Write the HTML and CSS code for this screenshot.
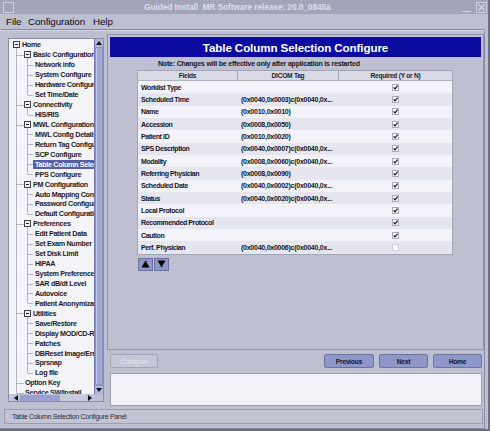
FILE: index.html
```html
<!DOCTYPE html>
<html>
<head>
<meta charset="utf-8">
<link rel="stylesheet" href="styles.css">
</head>
<body>
<div class="win">
  <div class="titlebar">
    <span class="ticon"></span>
    <span class="ttext">Guided Install&nbsp; MR Software release: 20.0_0845a</span>
    <span class="tmin"></span>
    <span class="tclose"><svg width="9" height="9" viewBox="0 0 9 9"><path d="M1.5 1.5L7.5 7.5M7.5 1.5L1.5 7.5" stroke="#d4d6e2" stroke-width="1.2"/></svg></span>
  </div>
  <div class="menubar">
    <span class="menu m-file">File</span>
    <span class="menu m-conf">Configuration</span>
    <span class="menu">Help</span>
  </div>
  <div class="bodyarea">
    <div class="main">
      <div class="navbox">
        <div class="navtop">
          <div class="tree">
            <div class="r r0"><span class="ex"></span><span class="t">Home</span></div>
            <div class="r r1 open"><span class="ex"></span><span class="t">Basic Configuration</span></div>
            <div class="r r2"><span class="t">Network info</span></div>
            <div class="r r2"><span class="t">System Configure</span></div>
            <div class="r r2"><span class="t">Hardware Configure</span></div>
            <div class="r r2 last"><span class="t">Set Time/Date</span></div>
            <div class="r r1 open"><span class="ex"></span><span class="t">Connectivity</span></div>
            <div class="r r2 last"><span class="t">HIS/RIS</span></div>
            <div class="r r1 open"><span class="ex"></span><span class="t">MWL Configuration</span></div>
            <div class="r r2"><span class="t">MWL Config Details</span></div>
            <div class="r r2"><span class="t">Return Tag Configure</span></div>
            <div class="r r2"><span class="t">SCP Configure</span></div>
            <div class="r r2"><span class="t sel">Table Column Selection</span></div>
            <div class="r r2 last"><span class="t">PPS Configure</span></div>
            <div class="r r1 open"><span class="ex"></span><span class="t">PM Configuration</span></div>
            <div class="r r2"><span class="t">Auto Mapping Configure</span></div>
            <div class="r r2"><span class="t">Password Configure</span></div>
            <div class="r r2 last"><span class="t">Default Configuration</span></div>
            <div class="r r1 open"><span class="ex"></span><span class="t">Preferences</span></div>
            <div class="r r2"><span class="t">Edit Patient Data</span></div>
            <div class="r r2"><span class="t">Set Exam Number</span></div>
            <div class="r r2"><span class="t">Set Disk Limit</span></div>
            <div class="r r2"><span class="t">HIPAA</span></div>
            <div class="r r2"><span class="t">System Preferences</span></div>
            <div class="r r2"><span class="t">SAR dB/dt Level</span></div>
            <div class="r r2"><span class="t">Autovoice</span></div>
            <div class="r r2 last"><span class="t">Patient Anonymization</span></div>
            <div class="r r1 open"><span class="ex"></span><span class="t">Utilities</span></div>
            <div class="r r2"><span class="t">Save/Restore</span></div>
            <div class="r r2"><span class="t">Display MOD/CD-ROM</span></div>
            <div class="r r2"><span class="t">Patches</span></div>
            <div class="r r2"><span class="t">DBReset Image/Error</span></div>
            <div class="r r2"><span class="t">Sprsnap</span></div>
            <div class="r r2 last"><span class="t">Log file</span></div>
            <div class="r r1 leaf"><span class="t">Option Key</span></div>
            <div class="r r1 leaf"><span class="t">Service SW/Install</span></div>
          </div>
          <div class="vscroll">
            <div class="sb"><svg width="6" height="4" viewBox="0 0 6 4"><path d="M3 0L6 4H0Z" fill="#111"/></svg></div>
            <div class="vthumb"></div>
            <div class="sb"><svg width="6" height="4" viewBox="0 0 6 4"><path d="M0 0H6L3 4Z" fill="#111"/></svg></div>
          </div>
        </div>
        <div class="navbottom">
          <div class="hscroll">
            <div class="hb"><svg width="4" height="6" viewBox="0 0 4 6"><path d="M0 3L4 0V6Z" fill="#111"/></svg></div>
            <div class="hthumb"></div>
            <div class="htrack"></div>
            <div class="hb"><svg width="4" height="6" viewBox="0 0 4 6"><path d="M4 3L0 0V6Z" fill="#111"/></svg></div>
          </div>
          <div class="corner"></div>
        </div>
      </div>
      <div class="right">
        <div class="config">
          <div class="banner">Table Column Selection Configure</div>
          <div class="note">Note: Changes will be effective only after application is restarted</div>
          <div class="table">
            <div class="thead">
              <div class="th">Fields</div>
              <div class="th">DICOM Tag</div>
              <div class="th last">Required (Y or N)</div>
            </div>
            <div class="tr"><div class="td f">Worklist Type</div><div class="td d"></div><div class="td c"><span class="cb on"><svg width="5" height="5" viewBox="0 0 5 5"><path d="M0.6 2.4L2 3.9L4.6 0.6" stroke="#111" stroke-width="1.1" fill="none"/></svg></span></div></div>
            <div class="tr"><div class="td f">Scheduled Time</div><div class="td d">(0x0040,0x0003)c(0x0040,0x...</div><div class="td c"><span class="cb on"><svg width="5" height="5" viewBox="0 0 5 5"><path d="M0.6 2.4L2 3.9L4.6 0.6" stroke="#111" stroke-width="1.1" fill="none"/></svg></span></div></div>
            <div class="tr"><div class="td f">Name</div><div class="td d">(0x0010,0x0010)</div><div class="td c"><span class="cb on"><svg width="5" height="5" viewBox="0 0 5 5"><path d="M0.6 2.4L2 3.9L4.6 0.6" stroke="#111" stroke-width="1.1" fill="none"/></svg></span></div></div>
            <div class="tr"><div class="td f">Accession</div><div class="td d">(0x0008,0x0050)</div><div class="td c"><span class="cb on"><svg width="5" height="5" viewBox="0 0 5 5"><path d="M0.6 2.4L2 3.9L4.6 0.6" stroke="#111" stroke-width="1.1" fill="none"/></svg></span></div></div>
            <div class="tr"><div class="td f">Patient ID</div><div class="td d">(0x0010,0x0020)</div><div class="td c"><span class="cb on"><svg width="5" height="5" viewBox="0 0 5 5"><path d="M0.6 2.4L2 3.9L4.6 0.6" stroke="#111" stroke-width="1.1" fill="none"/></svg></span></div></div>
            <div class="tr"><div class="td f">SPS Description</div><div class="td d">(0x0040,0x0007)c(0x0040,0x...</div><div class="td c"><span class="cb on"><svg width="5" height="5" viewBox="0 0 5 5"><path d="M0.6 2.4L2 3.9L4.6 0.6" stroke="#111" stroke-width="1.1" fill="none"/></svg></span></div></div>
            <div class="tr"><div class="td f">Modality</div><div class="td d">(0x0008,0x0060)c(0x0040,0x...</div><div class="td c"><span class="cb on"><svg width="5" height="5" viewBox="0 0 5 5"><path d="M0.6 2.4L2 3.9L4.6 0.6" stroke="#111" stroke-width="1.1" fill="none"/></svg></span></div></div>
            <div class="tr"><div class="td f">Referring Physician</div><div class="td d">(0x0008,0x0090)</div><div class="td c"><span class="cb on"><svg width="5" height="5" viewBox="0 0 5 5"><path d="M0.6 2.4L2 3.9L4.6 0.6" stroke="#111" stroke-width="1.1" fill="none"/></svg></span></div></div>
            <div class="tr"><div class="td f">Scheduled Date</div><div class="td d">(0x0040,0x0002)c(0x0040,0x...</div><div class="td c"><span class="cb on"><svg width="5" height="5" viewBox="0 0 5 5"><path d="M0.6 2.4L2 3.9L4.6 0.6" stroke="#111" stroke-width="1.1" fill="none"/></svg></span></div></div>
            <div class="tr"><div class="td f">Status</div><div class="td d">(0x0040,0x0020)c(0x0040,0x...</div><div class="td c"><span class="cb on"><svg width="5" height="5" viewBox="0 0 5 5"><path d="M0.6 2.4L2 3.9L4.6 0.6" stroke="#111" stroke-width="1.1" fill="none"/></svg></span></div></div>
            <div class="tr"><div class="td f">Local Protocol</div><div class="td d"></div><div class="td c"><span class="cb on"><svg width="5" height="5" viewBox="0 0 5 5"><path d="M0.6 2.4L2 3.9L4.6 0.6" stroke="#111" stroke-width="1.1" fill="none"/></svg></span></div></div>
            <div class="tr"><div class="td f">Recommended Protocol</div><div class="td d"></div><div class="td c"><span class="cb on"><svg width="5" height="5" viewBox="0 0 5 5"><path d="M0.6 2.4L2 3.9L4.6 0.6" stroke="#111" stroke-width="1.1" fill="none"/></svg></span></div></div>
            <div class="tr"><div class="td f">Caution</div><div class="td d"></div><div class="td c"><span class="cb on"><svg width="5" height="5" viewBox="0 0 5 5"><path d="M0.6 2.4L2 3.9L4.6 0.6" stroke="#111" stroke-width="1.1" fill="none"/></svg></span></div></div>
            <div class="tr"><div class="td f">Perf. Physician</div><div class="td d">(0x0040,0x0006)c(0x0040,0x...</div><div class="td c"><span class="cb off"></span></div></div>
          </div>
          <div class="arrows">
            <div class="abtn"><svg width="9" height="8" viewBox="0 0 9 8"><path d="M4.5 0.5L8.5 7.5H0.5Z" fill="#000"/></svg></div>
            <div class="abtn"><svg width="9" height="8" viewBox="0 0 9 8"><path d="M0.5 0.5H8.5L4.5 7.5Z" fill="#000"/></svg></div>
          </div>
        </div>
        <div class="btnrow">
          <div class="btn dis">Configure</div>
          <div class="btn prev">Previous</div>
          <div class="btn">Next</div>
          <div class="btn">Home</div>
        </div>
        <div class="msgbox"></div>
      </div>
    </div>
    <div class="status">Table Column Selection Configure Panel</div>
  </div>
</div>
</body>
</html>
```

FILE: styles.css
```css
:root {
  --ln: #b3b5c6;
  --bg: #bec0d1;
}
html, body {
  margin: 0;
  padding: 0;
}
body {
  width: 490px;
  height: 431px;
  overflow: hidden;
  background: var(--bg);
  font-family: "Liberation Sans", Arial, sans-serif;
  color: #15151f;
}
.win {
  width: 490px;
  height: 431px;
  box-sizing: border-box;
  display: flex;
  flex-direction: column;
  background: var(--bg);
  padding-right: 3px;
  border-right: 2px solid #6c6f86;
  border-bottom: 2px solid #6c6f86;
}

/* title bar */
.titlebar {
  height: 14px;
  flex: none;
  display: flex;
  align-items: center;
  background: #a2a5ba;
  margin-right: -3px;
}
.ticon {
  width: 9px;
  height: 9px;
  border: 1px solid #cdd0dc;
  margin-left: 3px;
  flex: none;
}
.ttext {
  margin-left: 130px;
  font-size: 8.4px;
  letter-spacing: -0.1px;
  font-weight: bold;
  color: #dcdee9;
  white-space: nowrap;
}
.tmin {
  margin-left: auto;
  width: 9px;
  height: 1px;
  background: #d6d8e3;
  align-self: flex-end;
  margin-bottom: 2px;
}
.tclose {
  margin-left: 5px;
  margin-right: 1px;
  width: 11px;
  height: 11px;
  box-sizing: border-box;
  border: 1px solid #cdd0dc;
  display: flex;
  align-items: center;
  justify-content: center;
}

/* menu bar */
.menubar {
  height: 15px;
  flex: none;
  display: flex;
  align-items: center;
  padding-left: 6px;
  font-size: 9.8px;
  letter-spacing: -0.1px;
  color: #0c0c14;
  border-bottom: 1px solid #878aa1;
}
.menu { white-space: nowrap; }
.m-file { width: 22px; }
.m-conf { width: 65px; }

/* body */
.bodyarea {
  flex: 1;
  display: flex;
  flex-direction: column;
  padding-left: 4px;
  border-top: 1px solid #d4d6e2;
  border-right: 1px solid #878aa1;
  border-bottom: 1px solid #878aa1;
}
.main {
  display: flex;
  align-items: flex-start;
  margin-top: 3px;
}

/* navigation tree */
.navbox {
  width: 96px;
  height: 364px;
  margin-left: 4px;
  margin-top: 4px;
  box-sizing: border-box;
  border: 1px solid #8a8da4;
  display: flex;
  flex-direction: column;
  flex: none;
}
.navtop {
  display: flex;
  height: 355px;
}
.tree {
  width: 85px;
  height: 355px;
  overflow: hidden;
  background: #f5f5f9;
  padding-top: 1px;
  box-sizing: border-box;
  font-size: 7.2px;
  letter-spacing: -0.32px;
  font-weight: bold;
  color: #1b1b28;
}
.r {
  height: 9.95px;
  display: flex;
  align-items: center;
  white-space: nowrap;
  background-repeat: no-repeat;
}
.r0 {
  padding-left: 4px;
  background-image: linear-gradient(var(--ln), var(--ln));
  background-position: 7px 8px;
  background-size: 1px 2px;
}
.r1 {
  padding-left: 15px;
  background-image: linear-gradient(var(--ln), var(--ln)), linear-gradient(var(--ln), var(--ln));
  background-position: 7px 0, 8px 5px;
  background-size: 1px 100%, 7px 1px;
}
.r1.open {
  background-image: linear-gradient(var(--ln), var(--ln)), linear-gradient(var(--ln), var(--ln)), linear-gradient(var(--ln), var(--ln));
  background-position: 7px 0, 8px 5px, 18px 8px;
  background-size: 1px 100%, 7px 1px, 1px 2px;
}
.r2 {
  padding-left: 25px;
  background-image: linear-gradient(var(--ln), var(--ln)), linear-gradient(var(--ln), var(--ln)), linear-gradient(var(--ln), var(--ln));
  background-position: 7px 0, 18px 0, 19px 5px;
  background-size: 1px 100%, 1px 100%, 5px 1px;
}
.r2.last {
  background-size: 1px 100%, 1px 5px, 5px 1px;
}
.ex {
  flex: none;
  width: 7px;
  height: 7px;
  box-sizing: border-box;
  border: 1px solid #3d3d4c;
  background: #f5f5f9 linear-gradient(#1d1d28, #1d1d28) center / 3px 1px no-repeat;
  margin-right: 1px;
}
.t {
  padding: 0 1px;
  line-height: 9px;
}
.t.sel {
  flex: 1 0 auto;
  background: #5660a6;
  color: #ffffff;
  margin-left: -1px;
  padding-left: 2px;
}

.vscroll {
  width: 9px;
  box-sizing: border-box;
  display: flex;
  flex-direction: column;
  background: #8b93c6;
  border-left: 1px solid #737bb3;
}
.sb {
  height: 8px;
  flex: none;
  background: #b2b6dc;
  display: flex;
  align-items: center;
  justify-content: center;
}
.vthumb {
  flex: 1;
  margin: 1px 1px 2px;
  background: #a2a8d5;
  border-left: 1px solid #c2c6e6;
}
.navbottom {
  display: flex;
  height: 7px;
}
.hscroll {
  width: 85px;
  display: flex;
  background: #c9cbdc;
  padding-left: 3px;
  box-sizing: border-box;
}
.hb {
  width: 8px;
  flex: none;
  background: #bfc3de;
  display: flex;
  align-items: center;
  justify-content: center;
}
.hthumb {
  width: 40px;
  flex: none;
  background: #99a0d0;
  border-top: 1px solid #bdc1e2;
  box-sizing: border-box;
}
.htrack { flex: 1; }
.corner {
  width: 9px;
  background: var(--bg);
}

/* right side */
.right {
  width: 377px;
  margin-left: 3px;
  display: flex;
  flex-direction: column;
  flex: none;
}
.config {
  height: 316px;
  box-sizing: border-box;
  border: 1px solid #9194ab;
  padding: 2px 2px 0;
}
.banner {
  height: 20px;
  background: #0b0ba0;
  color: #ffffff;
  font-size: 11.6px;
  letter-spacing: -0.1px;
  font-weight: bold;
  display: flex;
  align-items: center;
  justify-content: center;
}
.note {
  margin-top: 2px;
  height: 10px;
  line-height: 10px;
  padding-left: 48px;
  font-size: 7px;
  letter-spacing: -0.2px;
  font-weight: bold;
  white-space: nowrap;
  color: #16161f;
}
.table {
  margin: 1px 0 0 27px;
  width: 316px;
  box-sizing: border-box;
  border: 1px solid #a3a6b9;
}
.thead {
  display: grid;
  grid-template-columns: 100px 101px 1fr;
  height: 9px;
  background: #d9dae6;
  border-bottom: 1px solid #b3b5c6;
}
.th {
  font-size: 6.6px;
  letter-spacing: -0.25px;
  font-weight: bold;
  display: flex;
  align-items: center;
  justify-content: center;
  border-right: 1px solid #a3a6b9;
  color: #1b1b28;
}
.th.last { border-right: none; }
.tr {
  display: grid;
  grid-template-columns: 100px 101px 1fr;
  height: 12.35px;
  background: #f3f3f9;
}
.tr:nth-of-type(odd) { background: #e5e6f0; }
.td {
  display: flex;
  align-items: center;
  white-space: nowrap;
  overflow: hidden;
  font-weight: bold;
  color: #15151f;
}
.td.f {
  font-size: 7px;
  letter-spacing: -0.4px;
  padding-left: 3px;
}
.td.d {
  font-size: 7px;
  letter-spacing: -0.25px;
  padding-left: 3px;
}
.td.c {
  justify-content: center;
}
.cb {
  width: 7px;
  height: 7px;
  box-sizing: border-box;
  border: 1px solid #a9abbd;
  background: #fafafd;
  display: flex;
  align-items: center;
  justify-content: center;
}
.cb.off {
  border-color: #cfd1dc;
}
.arrows {
  display: flex;
  gap: 1px;
  margin: 3px 0 0 28px;
}
.abtn {
  width: 15px;
  height: 13px;
  box-sizing: border-box;
  background: #8e97c8;
  border: 1px solid #6a72a8;
  display: flex;
  align-items: center;
  justify-content: center;
}

/* buttons */
.btnrow {
  display: flex;
  margin-top: 4px;
  height: 14px;
  padding: 0 2px 0 3px;
}
.btn {
  width: 49px;
  height: 14px;
  box-sizing: border-box;
  background: #8e97c8;
  border: 1px solid #6b73a9;
  border-radius: 2px;
  font-size: 6.6px;
  letter-spacing: -0.2px;
  font-weight: bold;
  color: #14142a;
  display: flex;
  align-items: center;
  justify-content: center;
  margin-left: 5px;
}
.btn.dis {
  width: 48px;
  margin-left: 0;
  background: #c5c7d6;
  border-color: #a3a6b9;
  color: #e3e4ee;
  font-weight: normal;
}
.btn.prev {
  width: 50px;
  margin-left: auto;
}
.msgbox {
  margin: 5px 2px 0 3px;
  height: 33px;
  box-sizing: border-box;
  background: #f1f1f7;
  border: 1px solid #9c9fb4;
}

/* status bar */
.status {
  margin-top: 3px;
  width: 479px;
  height: 15px;
  box-sizing: border-box;
  border: 1px solid #9a9db2;
  background: #c2c4d4;
  padding-left: 7px;
  font-size: 7px;
  letter-spacing: -0.3px;
  color: #2c2c38;
  display: flex;
  align-items: center;
  white-space: nowrap;
}
```
